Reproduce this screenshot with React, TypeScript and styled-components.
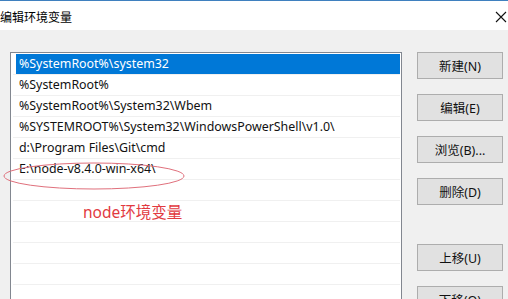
import styled, { createGlobalStyle } from "styled-components";

const GlobalStyle = createGlobalStyle`
    html, body {
        margin: 0;
        padding: 0;
        background: #f0f0f0;
        overflow: hidden;
    }
    body {
        font-family: "Noto Sans", "Noto Sans CJK SC", sans-serif;
    }
`;

const paths = [
    "%SystemRoot%\\system32",
    "%SystemRoot%",
    "%SystemRoot%\\System32\\Wbem",
    "%SYSTEMROOT%\\System32\\WindowsPowerShell\\v1.0\\",
    "d:\\Program Files\\Git\\cmd",
    "E:\\node-v8.4.0-win-x64\\",
    "",
    "",
    "",
    "",
    "",
    "",
];

const buttons = [
    { label: "新建(N)", extraGap: false },
    { label: "编辑(E)", extraGap: false },
    { label: "浏览(B)...", extraGap: false },
    { label: "删除(D)", extraGap: false },
    { label: "上移(U)", extraGap: true },
    { label: "下移(O)", extraGap: false },
];

const App: React.FC = () => {
    return (
        <Window>
            <GlobalStyle />
            <TitleBar>
                <Title>编辑环境变量</Title>
                <CloseIcon width="12" height="12" viewBox="0 0 12 12">
                    <path d="M1 1 L11 11 M11 1 L1 11" stroke="#111" strokeWidth="1.1" />
                </CloseIcon>
            </TitleBar>

            <Body>
                <PathList>
                    {paths.map((p, i) => (
                        <Row key={i} selected={i === 0}>
                            {p}
                        </Row>
                    ))}
                </PathList>

                <ButtonColumn>
                    {buttons.map((b) => (
                        <DialogButton key={b.label} extraGap={b.extraGap}>
                            {b.label}
                        </DialogButton>
                    ))}
                </ButtonColumn>
            </Body>

            {/* hand-drawn annotation on top of the screenshot */}
            <Ellipse width="184" height="30" viewBox="0 0 184 30">
                <ellipse cx="92" cy="15" rx="90" ry="13" fill="none" stroke="#e0707c" strokeWidth="1" />
            </Ellipse>
            <Note>node环境变量</Note>
        </Window>
    );
};

export default App;

const Window = styled.div`
    position: relative;
    width: 508px;
    height: 299px;
    overflow: hidden;
    background: #f0f0f0;
`;

const TitleBar = styled.div`
    display: flex;
    align-items: center;
    justify-content: space-between;
    height: 30px;
    box-sizing: border-box;
    border-top: 1px solid #3f80bf;
    background: #fff;
    padding: 0 1px 0 0;
`;

const Title = styled.span`
    font-family: "Noto Sans CJK SC", sans-serif;
    font-size: 12px;
    color: #000;
    line-height: 1;
    margin-top: 2px;
`;

const CloseIcon = styled.svg`
    margin-top: 2px;
`;

const Body = styled.div`
    display: flex;
    align-items: flex-start;
    padding: 22px 5px 0 10px;
`;

const PathList = styled.div`
    display: flex;
    flex-direction: column;
    width: 392px;
    height: 260px;
    box-sizing: border-box;
    border: 1px solid #828790;
    border-bottom: none;
    background: #fff;
    padding: 1px 1px 0 2px;
`;

const Row = styled.div<{ selected: boolean }>`
    height: 21px;
    flex-shrink: 0;
    box-sizing: border-box;
    border-bottom: 1px solid #f0f0f0;
    padding-left: 6px;
    font-size: 12.4px;
    line-height: 20px;
    white-space: nowrap;
    color: ${({ selected }) => (selected ? "#fff" : "#111")};
    background: ${({ selected }) =>
        selected ? "linear-gradient(to right, transparent 3px, #0078d7 3px)" : "transparent"};
`;

const ButtonColumn = styled.div`
    display: flex;
    flex-direction: column;
    gap: 15px;
    margin-left: 15px;
`;

const DialogButton = styled.button<{ extraGap: boolean }>`
    width: 86px;
    height: 27px;
    box-sizing: border-box;
    border: 1px solid #adadad;
    background: #e1e1e1;
    font-family: "Noto Sans", "Noto Sans CJK SC", sans-serif;
    font-size: 12.5px;
    color: #111;
    padding: 0;
    margin-top: ${({ extraGap }) => (extraGap ? "24px" : "0")};
`;

const Ellipse = styled.svg`
    position: absolute;
    left: 2px;
    top: 161px;
`;

const Note = styled.span`
    position: absolute;
    left: 83px;
    top: 202px;
    font-family: "Noto Sans", "Noto Sans CJK SC", sans-serif;
    font-size: 15.5px;
    line-height: 20px;
    color: #e23a3f;
`;
